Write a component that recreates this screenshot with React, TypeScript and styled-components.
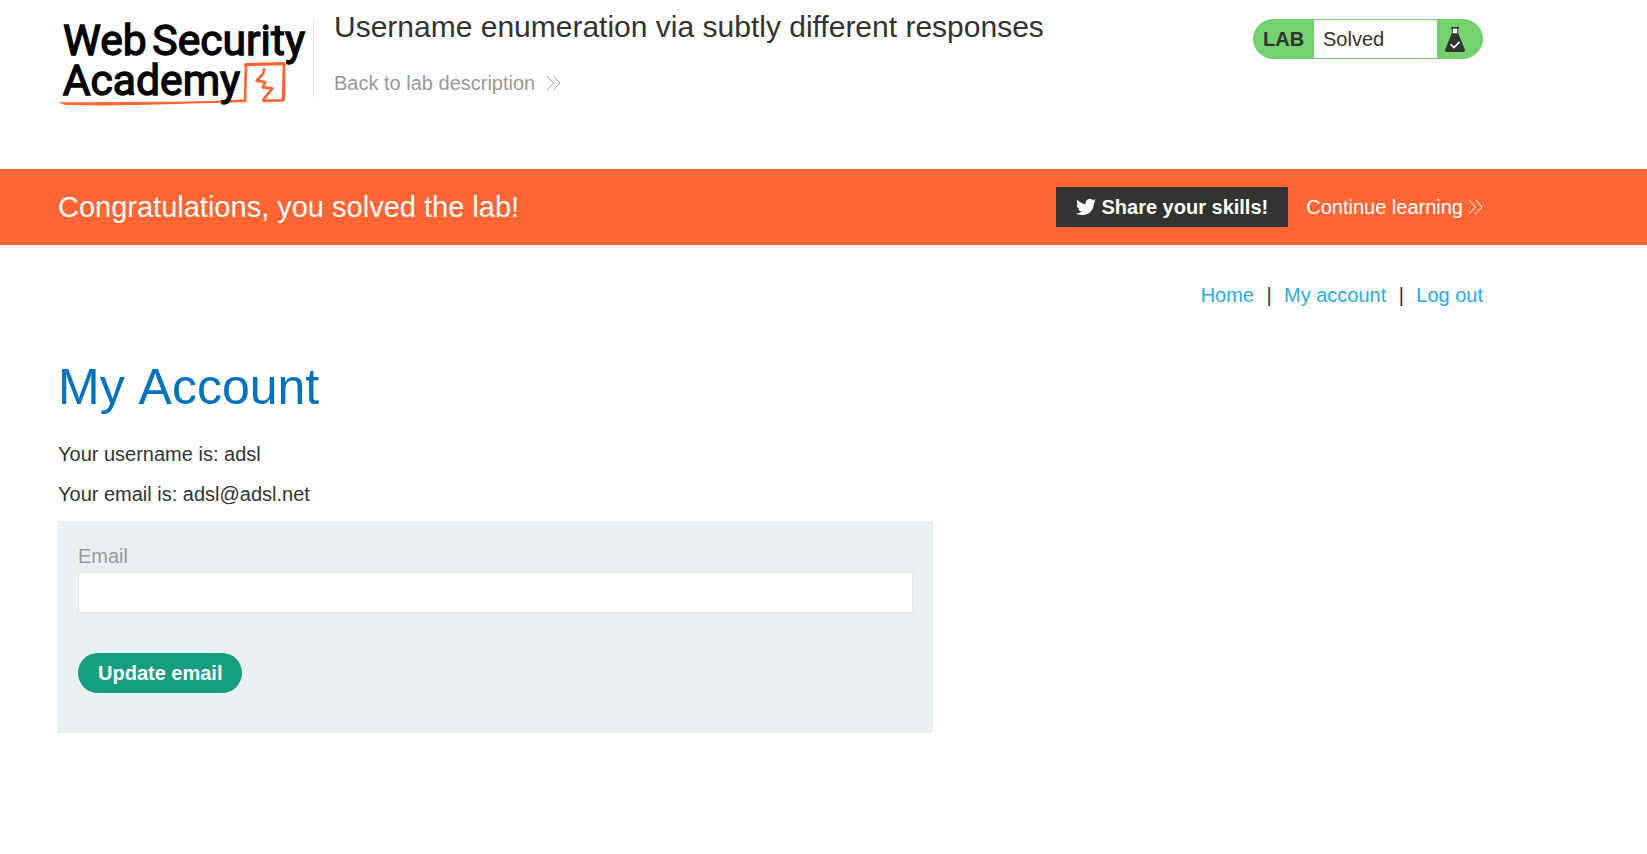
import React from "react";
import styled, { createGlobalStyle } from "styled-components";

const GlobalStyle = createGlobalStyle`
  *, *::before, *::after { box-sizing: border-box; }
  body {
    margin: 0;
    background: #fff;
    color: #333332;
    font-family: "Liberation Sans", Arial, sans-serif;
    font-size: 20px;
    line-height: 24px;
  }
  a { text-decoration: none; }
`;

const Container = styled.div`
  max-width: 1483px;
  padding-left: 58px;
`;

const Header = styled.header`
  height: 169px;
`;

const HeaderRow = styled(Container)`
  display: flex;
  align-items: flex-start;
`;

const LogoLink = styled.a`
  display: block;
  flex: none;
  margin-top: 19px;
  border-right: 1px solid #e4e4e4;
`;

const LogoSvg = styled.svg`
  display: block;
  width: 255px;
  height: 78px;
  overflow: visible;
`;

const LogoText = styled.text`
  font-family: Roboto, "Liberation Sans", sans-serif;
  font-size: 128px;
  font-weight: 400;
  fill: #000;
  stroke: #000;
  stroke-width: 4px;
`;

const TitleBlock = styled.div`
  flex: 1;
  padding: 9px 20px 0;
`;

const LabTitle = styled.h2`
  margin: 0 0 26px;
  font-size: 30px;
  line-height: 36px;
  font-weight: 400;
`;

const ArrowLink = styled.a<{ $color: string; $gap: number }>`
  display: inline-flex;
  align-items: center;
  gap: ${(p) => p.$gap}px;
  color: ${(p) => p.$color};
  white-space: nowrap;
`;

const Status = styled.div`
  display: flex;
  flex: none;
  width: 230px;
  height: 40px;
  margin-top: 19px;
  border: 1px solid #73d26d;
  border-radius: 20px;
  background: #73d26d;
  line-height: 38px;
  overflow: hidden;
`;

const StatusTag = styled.span`
  width: 60px;
  padding-left: 9px;
  font-weight: 700;
`;

const StatusText = styled.span`
  flex: 1;
  padding-left: 9px;
  background: #fff;
`;

const StatusIcon = styled.span`
  display: flex;
  width: 45px;
  padding: 7px 0 0 8px;
`;

const Banner = styled.section`
  background: #ff6633;
  color: #fff;
`;

const BannerRow = styled(Container)`
  display: flex;
  align-items: center;
  gap: 18px;
  height: 76px;
`;

const BannerTitle = styled.h4`
  flex: 1;
  margin: 0;
  font-size: 29px;
  line-height: 36px;
  font-weight: 400;
`;

const ShareButton = styled.button`
  display: flex;
  align-items: center;
  gap: 5px;
  height: 40px;
  padding: 0 20px;
  border: 0;
  background: #333332;
  color: #fff;
  font: inherit;
  font-weight: 700;
  cursor: pointer;
`;

const Nav = styled.nav`
  display: flex;
  justify-content: flex-end;
  gap: 12px;
  padding: 38px 0 50px;
`;

const NavLink = styled.a`
  color: #29abe2;
`;

const Separator = styled.span`
  width: 6px;
  text-align: center;
`;

const PageTitle = styled.h1`
  margin: 0 0 25px;
  color: #0071bc;
  font-size: 50px;
  line-height: 60px;
  font-weight: 400;
  font-kerning: none;
`;

const Details = styled.div`
  display: flex;
  flex-direction: column;
  gap: 16px;
  margin-bottom: 15px;
`;

const Info = styled.p`
  margin: 0;
`;

const Form = styled.form`
  max-width: 875px;
  padding: 23px 20px 40px;
  background: #eaeff2;
`;

const Label = styled.label`
  display: block;
  margin-bottom: 4px;
  color: #999;
`;

const EmailInput = styled.input`
  display: block;
  width: 100%;
  height: 41px;
  margin-bottom: 40px;
  padding: 0 10px;
  border: 1px solid #e4e4e4;
  background: #fff;
  font: inherit;
`;

const SubmitButton = styled.button`
  display: block;
  height: 40px;
  padding: 0 20px;
  border: 0;
  border-radius: 20px;
  background: #169c7f;
  color: #fff;
  font: inherit;
  font-weight: 700;
  cursor: pointer;
`;

const Chevrons = () => (
  <svg width="15" height="16" viewBox="0 0 15 16" fill="none" stroke="currentColor" strokeWidth="1" aria-hidden="true">
    <path d="M0.8 0.8 7.5 8 0.8 15.2M7.3 0.8 14 8 7.3 15.2" />
  </svg>
);

const Flask = () => (
  <svg width="20" height="25" viewBox="0 0 20 25" aria-hidden="true">
    <path d="M7 1.5h6v6H7z" fill="#fff" />
    <path d="M6 0h8v1.4h-.8V6.500h-1V1.400H7.800V6.500h-1V1.400H6z" fill="#333332" />
    <path d="M6.800 6.300h6.400L19.800 22.500Q20.400 25 18.200 25H1.800Q-.4 25 .2 22.500z" fill="#333332" />
    <path d="M5.600 17.200 8.900 20.500 14.600 14.900" fill="none" stroke="#fff" strokeWidth="1.600" />
  </svg>
);

const Twitter = () => (
  <svg width="20" height="18" viewBox="0 2 24 20" fill="currentColor" aria-hidden="true">
    <path d="M23.950 4.570a10 10 0 0 1-2.820.775 4.960 4.960 0 0 0 2.160-2.723c-.95.555-2.010.959-3.130 1.184a4.920 4.920 0 0 0-8.380 4.482C7.690 8.095 4.070 6.130 1.640 3.162a4.820 4.820 0 0 0-.666 2.475c0 1.710.87 3.213 2.190 4.096a4.900 4.900 0 0 1-2.230-.616v.06a4.920 4.920 0 0 0 3.950 4.827 5 5 0 0 1-2.210.085 4.940 4.940 0 0 0 4.600 3.420A9.870 9.870 0 0 1 0 19.540a13.990 13.990 0 0 0 7.550 2.209c9.050 0 14-7.496 14-13.985 0-.21 0-.42-.015-.63a9.940 9.940 0 0 0 2.460-2.548z" />
  </svg>
);

const Logo = () => (
  <LogoSvg viewBox="24 42 765 234" role="img" aria-label="Web Security Academy">
    <g fill="none" stroke="#ff6633" strokeLinejoin="round" strokeLinecap="round">
      <path d="M585 288 588 178 702 175 699 286 640 287" strokeWidth="8" />
      <path d="M584 181 700 178M703 178 702 286" strokeWidth="6" />
      <path d="M642 193 640 205 620 227 646 231 638 247 667 250 640 284" strokeWidth="8" />
    </g>
    <path d="M27 292Q210 290 350 290T588 283L588 291Q500 293 350 298T50 300Q32 297 27 292z" fill="#ff6633" />
    <LogoText x="39" y="149">Web</LogoText>
    <LogoText x="307" y="149">Security</LogoText>
    <LogoText x="38" y="271">Academy</LogoText>
  </LogoSvg>
);

export default function App() {
  return (
    <>
      <GlobalStyle />
      <Header>
        <HeaderRow>
          <LogoLink href="#">
            <Logo />
          </LogoLink>
          <TitleBlock>
            <LabTitle>Username enumeration via subtly different responses</LabTitle>
            <ArrowLink href="#" $color="#999" $gap={11}>
              Back to lab description
              <Chevrons />
            </ArrowLink>
          </TitleBlock>
          <Status>
            <StatusTag>LAB</StatusTag>
            <StatusText>Solved</StatusText>
            <StatusIcon>
              <Flask />
            </StatusIcon>
          </Status>
        </HeaderRow>
      </Header>
      <Banner>
        <BannerRow>
          <BannerTitle>Congratulations, you solved the lab!</BannerTitle>
          <ShareButton type="button">
            <Twitter />
            Share your skills!
          </ShareButton>
          <ArrowLink href="#" $color="#fff" $gap={5}>
            Continue learning
            <Chevrons />
          </ArrowLink>
        </BannerRow>
      </Banner>
      <Container as="main">
        <Nav>
          <NavLink href="#">Home</NavLink>
          <Separator>|</Separator>
          <NavLink href="#">My account</NavLink>
          <Separator>|</Separator>
          <NavLink href="#">Log out</NavLink>
        </Nav>
        <PageTitle>My Account</PageTitle>
        <Details>
          <Info>Your username is: adsl</Info>
          <Info>Your email is: adsl@adsl.net</Info>
        </Details>
        <Form onSubmit={(e) => e.preventDefault()}>
          <Label htmlFor="email">Email</Label>
          <EmailInput id="email" type="email" name="email" />
          <SubmitButton type="submit">Update email</SubmitButton>
        </Form>
      </Container>
    </>
  );
}
